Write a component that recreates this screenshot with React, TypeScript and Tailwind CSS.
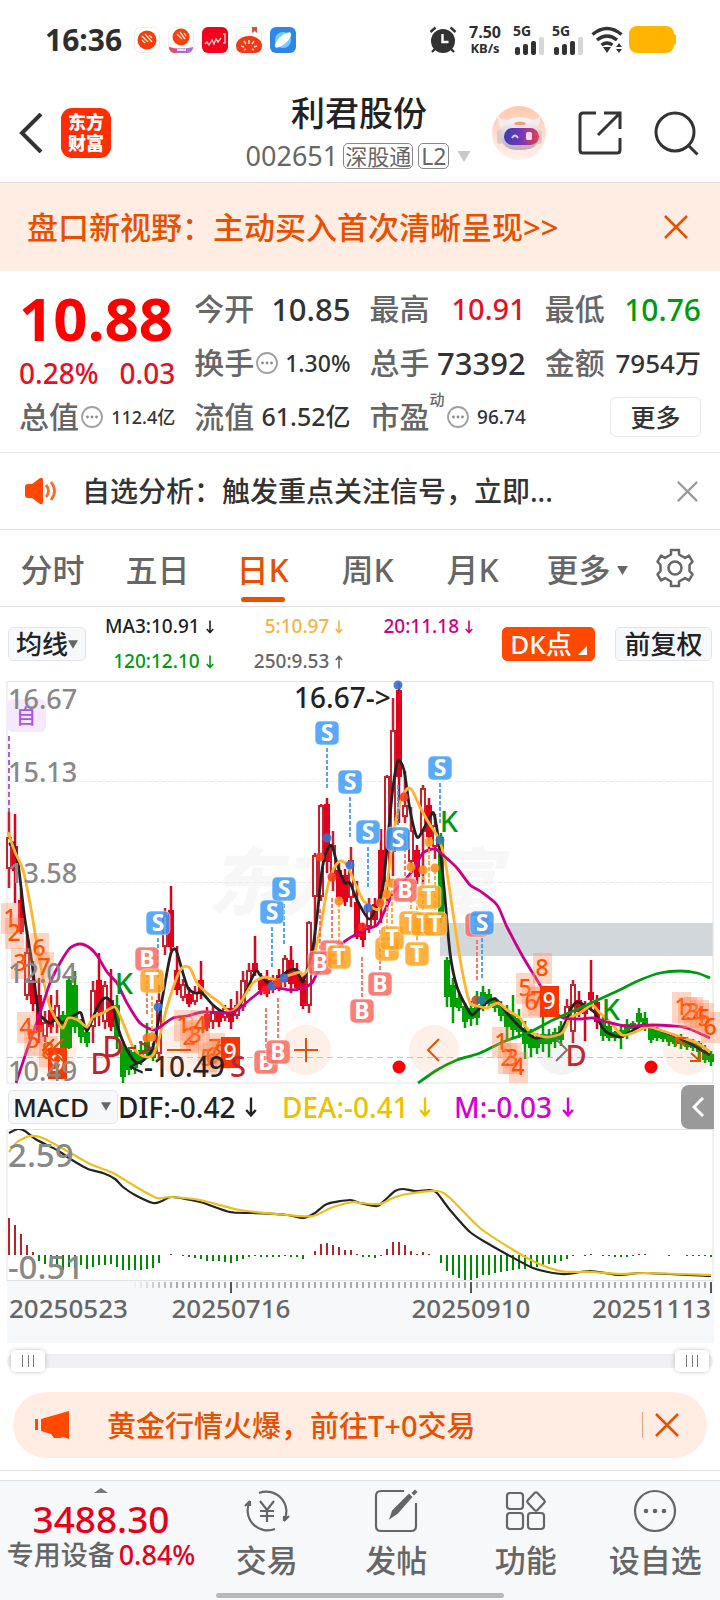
import React, { useState } from 'react';

const FONT = "font-['Noto_Sans','Noto_Sans_CJK_SC',sans-serif]";

// --- K-LINE DATA: [colour, high, body top, body bottom, low] in chart units ---
// r = hollow rise, R = solid red, g = fall
type Candle = [string, number, number, number, number];

const CANDLES: Candle[] = [
  ['r', 131, 157, 187, 207], ['R', 133, 166, 189, 222], ['R', 207, 220, 250, 253], ['r', 250, 272, 314, 319],
  ['R', 280, 300, 322, 330], ['R', 297, 315, 350, 362], ['r', 330, 342, 355, 361], ['R', 314, 330, 345, 352],
  ['r', 309, 325, 340, 352], ['g', 330, 335, 367, 369], ['g', 296, 300, 366, 368], ['g', 290, 305, 345, 352],
  ['g', 338, 342, 355, 362], ['g', 348, 352, 361, 366], ['r', 300, 310, 345, 362], ['R', 272, 300, 330, 345],
  ['r', 300, 305, 340, 348], ['R', 288, 320, 345, 350], ['g', 314, 325, 355, 368], ['g', 360, 368, 395, 402],
  ['g', 366, 370, 388, 394], ['g', 364, 372, 386, 393], ['g', 360, 370, 380, 384], ['g', 342, 362, 372, 378],
  ['g', 362, 368, 376, 380], ['r', 304, 320, 372, 377], ['r', 227, 235, 265, 274], ['R', 205, 230, 265, 270],
  ['R', 265, 290, 308, 314], ['r', 298, 304, 316, 320], ['R', 306, 314, 322, 326], ['r', 305, 312, 320, 324],
  ['R', 280, 300, 312, 318], ['R', 326, 334, 346, 350], ['r', 324, 332, 340, 348], ['R', 328, 333, 340, 346],
  ['r', 324, 328, 336, 340], ['R', 318, 328, 340, 348], ['r', 310, 325, 334, 338], ['r', 290, 300, 325, 330],
  ['r', 282, 290, 305, 310], ['R', 255, 283, 290, 295], ['R', 292, 298, 308, 314], ['R', 289, 300, 312, 316],
  ['r', 294, 299, 308, 312], ['R', 288, 295, 305, 310], ['r', 274, 278, 300, 306], ['R', 265, 280, 302, 312],
  ['R', 282, 290, 306, 310], ['R', 292, 300, 324, 328], ['r', 240, 242, 324, 332], ['r', 172, 175, 215, 280],
  ['r', 123, 125, 215, 220], ['R', 117, 124, 180, 192], ['r', 150, 165, 195, 210], ['R', 182, 190, 215, 220],
  ['R', 188, 195, 220, 225], ['r', 166, 180, 216, 226], ['R', 200, 222, 255, 258], ['R', 242, 250, 258, 266],
  ['r', 217, 225, 245, 252], ['R', 217, 224, 238, 246], ['R', 148, 170, 220, 242], ['r', 94, 96, 200, 230],
  ['r', 17, 50, 170, 195], ['R', 2, 10, 95, 142], ['r', 90, 125, 135, 142], ['r', 126, 150, 180, 186],
  ['R', 164, 170, 195, 203], ['r', 104, 108, 150, 205], ['R', 117, 125, 155, 168], ['r', 133, 145, 165, 178],
  ['g', 152, 157, 235, 242], ['g', 276, 280, 315, 326], ['g', 297, 305, 325, 342], ['g', 310, 318, 326, 330],
  ['g', 322, 326, 340, 347], ['g', 320, 328, 337, 345], ['g', 310, 325, 336, 344], ['g', 305, 312, 324, 330],
  ['g', 308, 314, 322, 327], ['g', 316, 320, 326, 331], ['g', 320, 325, 334, 340], ['g', 324, 330, 345, 359],
  ['g', 314, 334, 348, 356], ['g', 328, 338, 350, 357], ['g', 340, 348, 362, 378], ['g', 348, 354, 366, 376],
  ['g', 352, 358, 366, 373], ['g', 334, 354, 362, 371], ['g', 348, 356, 362, 376], ['g', 347, 352, 360, 367],
  ['g', 340, 346, 358, 365], ['r', 318, 326, 336, 342], ['r', 299, 304, 350, 362], ['R', 310, 320, 330, 336],
  ['R', 320, 326, 332, 360], ['R', 279, 312, 318, 328], ['R', 314, 322, 340, 348], ['g', 336, 342, 354, 360],
  ['g', 342, 346, 356, 360], ['g', 350, 352, 356, 360], ['g', 344, 350, 356, 368], ['g', 338, 344, 352, 358],
  ['g', 340, 343, 347, 350], ['g', 327, 333, 340, 345], ['g', 331, 338, 346, 350], ['g', 344, 347, 358, 362],
  ['g', 346, 350, 356, 360], ['g', 349, 352, 357, 361], ['g', 352, 354, 360, 365], ['g', 354, 357, 362, 366],
  ['g', 353, 358, 362, 368], ['g', 356, 360, 365, 369], ['g', 358, 361, 366, 370], ['g', 360, 363, 370, 378],
  ['g', 364, 370, 378, 382], ['g', 370, 374, 380, 385],
];

const MACD_BARS = [
  37, 30, 21, 10, 3, -6, -9, -11, -12, -15, -12, -13, -10, -14, -12, -10, -10, -9, -12, -15, -15, -15, -15, -14, -13,
  -8, 0, 1, 0, -1, -2, -3, -4, -6, -6, -6, -7, -8, -6, -4, -2, -1, -2, -2, -2, -2, -1, -2, -2, -4, 0, 4, 11, 12, 10,
  8, 5, 5, 1, -2, -2, -3, -1, 6, 13, 13, 10, 4, 1, 3, 1, 0, -8, -16, -20, -23, -25, -25, -23, -20, -20, -18, -17,
  -16, -15, -14, -14, -13, -12, -11, -9, -8, -6, -4, -1, 0, -1, 1, 0, -1, -1, -2, -2, -2, -1, 1, 1, 0, 0, 0, -1, 0,
  0, -1, -1, -1, -1, -2,
];

const MA3 =
  '9,164 13,162 18,182 21,206 25,239 32,282 38,329 42,336 50,342 57,337 62,342 68,337 75,334 81,332 87,350 97,327 105,317 112,322 118,347 127,369 137,382 147,376 153,366 158,342 165,302 171,272 176,269 182,289 188,307 195,312 202,312 213,324 223,331 233,332 240,324 255,291 260,294 267,301 273,302 280,296 290,289 297,289 300,296 303,301 307,289 312,272 317,236 322,189 327,169 332,165 338,186 345,202 350,202 357,219 369,238 377,224 383,206 388,156 393,106 398,80 404,89 410,129 417,156 423,149 430,136 434,133 440,169 444,206 450,272 457,306 467,327 472,334 478,329 490,319 497,319 507,332 520,346 535,357 547,355 558,354 565,342 572,326 578,321 587,326 595,332 602,346 608,352 620,356 630,351 643,344 653,347 667,352 687,361 710,374';
const MA5 =
  '8,151 15,171 23,189 30,222 35,252 42,292 50,326 62,347 68,337 78,339 87,346 93,336 103,332 115,326 123,342 133,366 143,375 152,375 158,362 167,326 177,296 183,286 190,287 197,302 207,312 220,322 230,331 240,322 253,302 265,296 277,299 290,294 300,291 303,294 312,282 320,249 327,209 333,189 340,180 347,184 355,202 363,219 373,227 380,227 387,202 393,156 400,122 407,108 412,109 420,126 430,144 438,156 445,179 453,232 462,289 470,322 478,325 487,327 498,322 507,329 520,337 530,351 547,356 562,352 570,337 580,332 592,324 600,332 610,341 622,354 633,352 647,346 660,349 680,356 697,362 710,371';
const MA20 =
  '16,402 27,369 40,332 50,302 60,282 70,267 80,263 90,267 98,276 107,291 117,302 127,322 140,342 153,349 160,346 173,337 187,335 203,331 230,332 240,327 253,316 268,306 290,309 303,307 312,302 318,291 330,282 343,262 355,254 363,249 377,244 385,229 393,212 403,201 413,189 423,172 435,168 443,174 457,187 470,204 480,210 497,224 507,246 523,276 540,304 555,330 563,337 580,338 593,337 607,341 627,345 653,344 673,345 687,347 710,357';
const MA120 =
  '418,402 437,389 457,379 480,372 503,361 530,351 553,339 580,327 613,312 640,299 660,292 680,290 697,292 710,297';
const DIF =
  '9,4 18,0 25,2 37,11 57,21 72,31 88,40 103,44 115,50 123,58 135,66 153,74 162,72 172,68 200,73 230,83 253,84 287,86 303,89 315,84 327,75 350,71 360,74 377,77 385,71 395,62 403,60 415,62 430,61 437,64 450,81 470,103 487,114 510,127 533,139 553,144 567,145 590,142 620,146 643,144 711,147';
const DEA =
  '9,23 17,13 30,7 43,9 67,22 90,35 113,44 133,56 157,69 170,68 200,71 240,81 287,86 313,87 333,78 353,73 360,74 380,75 393,69 407,65 437,62 450,69 480,99 510,119 537,134 560,142 577,143 593,143 620,145 647,144 711,146';

// Trade marks: [kind, x, y, connector below the badge]
type Mark = [string, number, number, boolean?];
const MARKS: Mark[] = [
  ['B', 147, 278, true], ['T', 152, 300, true], ['S', 158, 242, true], ['S', 272, 231, true], ['S', 284, 208, true],
  ['S', 327, 52, true], ['S', 350, 101, true], ['S', 368, 151, true], ['S', 440, 87, true], ['B', 266, 381],
  ['B', 278, 371], ['B', 332, 271], ['B', 320, 282], ['T', 339, 276], ['B', 362, 330], ['B', 380, 303],
  ['T', 387, 268], ['T', 392, 257], ['T', 411, 242], ['T', 423, 243], ['T', 435, 243], ['T', 429, 216],
  ['B', 405, 209], ['T', 417, 273], ['S', 398, 158], ['B', 477, 244, true], ['S', 482, 242, true],
];
const MARK_COLOR: Record<string, string> = { S: '#3f9bf8', B: '#fa6a60', T: '#ffa31f' };

const DOTS: [string, number, number][] = [
  ['#ff6a1a', 147, 357], ['#ff8c1a', 152, 356], ['#3a6fd8', 158, 326], ['#ff3b1f', 320, 176], ['#3a6fd8', 327, 157],
  ['#ff3b1f', 332, 196], ['#ff8c1a', 339, 220], ['#3a6fd8', 350, 184], ['#ff1f1f', 362, 246], ['#3a6fd8', 368, 227],
  ['#ff5a1a', 380, 222], ['#ff8c1a', 387, 213], ['#ff8c1a', 392, 202], ['#3a6fd8', 398, 4], ['#ff3b1f', 404, 116],
  ['#ff8c1a', 411, 186], ['#ff8c1a', 423, 189], ['#ff9f1a', 429, 161], ['#ff8c1a', 435, 187], ['#2f7fae', 440, 159],
  ['#ff1f1f', 266, 309], ['#3a6fd8', 272, 305], ['#ff3b1f', 278, 302], ['#3a6fd8', 284, 297], ['#b8502a', 476, 319],
  ['#1f7fa8', 482, 319],
];

// Nine-turn sequence counts
const COUNTS: [number, number, number][] = [
  [1, 10, 237], [2, 14, 252], [3, 20, 282], [6, 39, 267], [7, 44, 286], [4, 26, 346], [5, 33, 359], [8, 48, 370],
  [9, 57, 382], [1, 183, 344], [2, 189, 356], [3, 195, 354], [4, 200, 344], [5, 207, 377], [6, 212, 375],
  [7, 215, 367], [8, 221, 372], [9, 230, 371], [5, 525, 307], [6, 531, 321], [7, 537, 319], [8, 542, 287],
  [9, 549, 320], [1, 501, 361], [2, 507, 377], [3, 512, 377], [4, 518, 386], [1, 681, 326], [2, 687, 331],
  [3, 693, 331], [4, 699, 334], [5, 704, 337], [6, 710, 346],
];

const LETTERS: [string, number, number, string][] = [
  ['K', 124, 313, '#009a10'], ['K', 449, 151, '#009a10'], ['K', 611, 339, '#009a10'], ['D', 113, 376, '#c2222c'],
  ['D', 101, 393, '#c2222c'], ['D', 576, 385, '#c2222c'], ['S', 238, 396, '#c2222c'],
];

// Turns "x,y x,y" into a smooth path through every point
function smooth(points: string) {
  const p = points.split(' ').map((s) => s.split(',').map(Number));
  let d = `M${p[0][0]} ${p[0][1]}`;
  for (let i = 0; i < p.length - 1; i++) {
    const a = p[Math.max(i - 1, 0)];
    const b = p[i];
    const c = p[i + 1];
    const e = p[Math.min(i + 2, p.length - 1)];
    d += `C${b[0] + (c[0] - a[0]) / 8} ${b[1] + (c[1] - a[1]) / 8} ${c[0] - (e[0] - b[0]) / 8} ${c[1] - (e[1] - b[1]) / 8} ${c[0]} ${c[1]}`;
  }
  return d;
}

const candleX = (i: number) => 9 + i * 6;

function Arrow({ up = false, className }: { up?: boolean; className: string }) {
  return (
    <svg viewBox="0 0 12 20" className={className} fill="none" stroke="currentColor" strokeWidth="2" aria-hidden="true">
      {up ? <path d="M6 18V3M2 7.500L6 3l4 4.500" /> : <path d="M6 2v15M2 12.500L6 17l4-4.500" />}
    </svg>
  );
}

function Caret({ className }: { className: string }) {
  return (
    <svg viewBox="0 0 12 10" className={className} fill="currentColor" aria-hidden="true">
      <path d="M0 0h12L6 10z" />
    </svg>
  );
}

function Cross({ className }: { className: string }) {
  return (
    <svg viewBox="0 0 24 24" className={className} fill="none" stroke="currentColor" strokeWidth="2.500" aria-hidden="true">
      <path d="M1 1l22 22M23 1L1 23" />
    </svg>
  );
}

function InfoDots() {
  return (
    <svg viewBox="0 0 22 22" className="ml-0.5 h-[22px] w-[22px] shrink-0" aria-hidden="true">
      <circle cx="11" cy="11" r="10" fill="none" stroke="#a0a0a0" strokeWidth="1.800" />
      <g fill="#8a8a8a">
        <circle cx="6.500" cy="11" r="1.400" />
        <circle cx="11" cy="11" r="1.400" />
        <circle cx="15.500" cy="11" r="1.400" />
      </g>
    </svg>
  );
}

function Signal() {
  return (
    <div className="flex w-[31px] flex-col">
      <span className="text-[14px] leading-[12px] font-bold">5G</span>
      <svg viewBox="0 0 31 18" className="h-[18px] w-[31px]" aria-hidden="true">
        <rect x="2" y="10" width="5" height="8" rx="2" fill="#333" />
        <rect x="10" y="7" width="5" height="11" rx="2" fill="#333" />
        <rect x="18" y="4" width="5" height="14" rx="2" fill="#333" />
        <rect x="26" y="0" width="5" height="18" rx="2" fill="#d6d6d6" />
      </svg>
    </div>
  );
}

function StatusBar() {
  return (
    <div className="flex h-20 items-center pl-[45px] pr-[43px] text-[#2e2e2e]">
      <span className="text-[30px] leading-none font-bold">16:36</span>
      <div className="ml-3 flex gap-2">
        <svg viewBox="0 0 26 26" className="h-[26px] w-[26px]" aria-hidden="true">
          <rect x=".5" y=".5" width="25" height="25" rx="6" fill="#fff" stroke="#eee" />
          <circle cx="13" cy="13" r="9.500" fill="#fb3c0a" />
          <path d="M8 9l6 6M11 7l7 8M15 8l3 3M8 13l3 3" stroke="#ffe9c9" strokeWidth="1.300" />
        </svg>
        <svg viewBox="0 0 26 26" className="h-[26px] w-[26px]" aria-hidden="true">
          <rect x=".5" y=".5" width="25" height="25" rx="6" fill="#fff" stroke="#eee" />
          <path d="M1 20q12 3 24 0v1q-1 5-6 5H7q-5 0-6-5z" fill="#b06ad6" />
          <path d="M1 20q6 2 9 2l-2 4q-6 0-7-6z" fill="#ef4a55" />
          <circle cx="13" cy="10" r="8.500" fill="#f5400f" />
          <path d="M9 7l5 5M12 5l5 7M16 6l2 3" stroke="#ffe9c9" strokeWidth="1.300" />
          <path d="M9 23h9" stroke="#fff" strokeWidth="1.500" />
        </svg>
        <svg viewBox="0 0 26 26" className="h-[26px] w-[26px]" aria-hidden="true">
          <rect width="26" height="26" rx="6" fill="#f4001c" />
          <path d="M3 17l2-2 2 3 3-5 2 4 2-5 2 3 3-4M21 7h2v9h-2" fill="none" stroke="#ffc5c5" strokeWidth="1.400" />
        </svg>
        <svg viewBox="0 0 26 26" className="h-[26px] w-[26px]" aria-hidden="true">
          <rect x=".5" y=".5" width="25" height="25" rx="6" fill="#fff" stroke="#eee" />
          <path d="M16 0h5v6l-2.500-2L16 6z" fill="#d6503a" />
          <path d="M0 18C1 12 7 9 13 9s12 3 13 9q0 8-7 8H7q-7 0-7-8z" fill="#ee3a1b" />
          <path d="M13 13v4M8 14l2 3M18 14l-2 3M5 19l3 1M21 19l-3 1M8 23l2-1M18 23l-2-1" stroke="#ffd9b5" strokeWidth="1.500" />
        </svg>
        <svg viewBox="0 0 26 26" className="h-[26px] w-[26px]" aria-hidden="true">
          <rect width="26" height="26" rx="6" fill="#2f86e6" />
          <circle cx="13" cy="13" r="8" fill="#74cdfb" />
          <ellipse cx="13" cy="13" rx="10.500" ry="4" fill="#fff" transform="rotate(-42 13 13)" />
        </svg>
      </div>
      <div className="ml-auto flex items-center">
        <svg viewBox="0 0 28 28" className="h-7 w-7" aria-hidden="true">
          <circle cx="14" cy="15" r="12" fill="#333" />
          <path d="M1.500 6l5-4.500M26.500 6l-5-4.500M6 23l-3 3M22 23l3 3" stroke="#333" strokeWidth="2.400" />
          <path d="M13.500 8v8h6" stroke="#fff" strokeWidth="2.400" fill="none" />
        </svg>
        <div className="ml-2 flex w-10 flex-col items-center font-bold">
          <span className="text-[16px] leading-4">7.50</span>
          <span className="text-[13px] leading-4">KB/s</span>
        </div>
        <div className="ml-2 flex gap-2">
          <Signal />
          <Signal />
        </div>
        <svg viewBox="0 0 32 28" className="ml-2 h-7 w-8" fill="none" stroke="#333" strokeWidth="3.400" aria-hidden="true">
          <path d="M1.500 8.500q14.500-12 29 0M6 14q10-8 20 0M10.500 19q5.500-4 11 0" />
          <path d="M12 21h8l-4 6z" fill="#333" stroke="none" />
          <path d="M25 21l3-4 3 4zM25 23l3 4 3-4z" fill="#333" stroke="none" />
        </svg>
        <svg viewBox="0 0 48 28" className="ml-1.5 h-7 w-12" aria-hidden="true">
          <rect width="45" height="27" rx="8" fill="#ffb400" />
          <rect x="43" y="8" width="4" height="11" rx="2" fill="#ffb400" />
        </svg>
      </div>
    </div>
  );
}

function Header() {
  return (
    <header className="grid h-[103px] grid-cols-[1fr_auto_1fr] items-center border-b border-[#dcdcdc] pt-1 pr-[21px] pl-[19px]">
      <div className="flex items-center gap-[18px]">
        <button aria-label="返回" className="cursor-pointer">
          <svg viewBox="0 0 24 40" className="h-10 w-6" fill="none" stroke="#333" strokeWidth="4" aria-hidden="true">
            <path d="M22 1L3 20l19 19" />
          </svg>
        </button>
        <div className="flex h-[50px] w-[50px] flex-col items-center justify-center rounded-[11px] bg-[#ff2e00] text-[18px] leading-[21px] font-black text-white">
          <span>东方</span>
          <span>财富</span>
        </div>
      </div>
      <div className="flex flex-col items-center">
        <h1 className="text-[34px] leading-[46px] font-medium text-[#222]">利君股份</h1>
        <div className="flex items-center gap-[5px] font-normal text-[#666]">
          <span className="text-[27px] leading-[40px]">002651</span>
          <span className="rounded-[5px] border border-[#888] px-px text-[22px] leading-[24px]">深股通</span>
          <span className="rounded-[5px] border border-[#888] px-[2px] text-[23px] leading-[24px]">L2</span>
          <Caret className="ml-0.5 h-[11px] w-4 text-[#c9c9c9]" />
        </div>
      </div>
      <div className="flex items-center justify-end gap-8">
        <button aria-label="智能助手" className="cursor-pointer">
          <svg viewBox="0 0 54 54" className="h-[54px] w-[54px]" aria-hidden="true">
            <defs>
              <linearGradient id="halo" x1="0" y1="0" x2="0" y2="1">
                <stop offset="0" stopColor="#ffc8ae" />
                <stop offset="1" stopColor="#fff1ea" />
              </linearGradient>
              <linearGradient id="visor" x1="0" y1="0" x2="1" y2="0">
                <stop offset="0" stopColor="#3a3bb0" />
                <stop offset=".5" stopColor="#7a36b8" />
                <stop offset="1" stopColor="#ee3d4a" />
              </linearGradient>
              <linearGradient id="shell" x1="0" y1="0" x2="0" y2="1">
                <stop offset="0" stopColor="#fdfafa" />
                <stop offset="1" stopColor="#b9aeb4" />
              </linearGradient>
            </defs>
            <circle cx="27" cy="27" r="27" fill="url(#halo)" />
            <path d="M6 10q3 4 10 4l-6 9q-5-5-4-13zM48 10q-3 4-10 4l6 9q5-5 4-13z" fill="#f8ece8" />
            <rect x="5" y="24" width="6" height="14" rx="3" fill="#d9cdd0" />
            <rect x="44" y="24" width="6" height="14" rx="3" fill="#d9cdd0" />
            <path d="M28 11c13 0 19 7 19 18 0 10-5 15-19 15S9 39 9 29c0-11 6-18 19-18z" fill="url(#shell)" />
            <path d="M22 17q6-3 12 0l-1 2H23z" fill="#e8a27c" />
            <rect x="12" y="22" width="35" height="17" rx="8.500" fill="url(#visor)" />
            <path d="M20 32q3-5 6 0" fill="none" stroke="#d8d0ff" strokeWidth="2" />
            <rect x="34" y="26" width="6" height="8" rx="1.500" fill="#ffd9e6" />
          </svg>
        </button>
        <button aria-label="分享" className="cursor-pointer">
          <svg viewBox="0 0 44 44" className="h-11 w-11" fill="none" stroke="#333" strokeWidth="3" aria-hidden="true">
            <path d="M18 2H5q-3 0-3 3v34q0 3 3 3h34q3 0 3-3V27M26 2h16v16M42 2L20 24" />
          </svg>
        </button>
        <button aria-label="搜索" className="cursor-pointer">
          <svg viewBox="0 0 45 45" className="h-[45px] w-[45px]" fill="none" stroke="#333" strokeWidth="3" aria-hidden="true">
            <circle cx="21" cy="21" r="19" />
            <path d="M34 34l9.500 9.500" />
          </svg>
        </button>
      </div>
    </header>
  );
}

function Quote({ label, value, info, sup, className }: { label: string; value: string; info?: boolean; sup?: string; className: string }) {
  return (
    <div className="flex h-[54px] items-center justify-between whitespace-nowrap">
      <dt className="flex items-center text-[30px] leading-[36px] text-[#666]">
        {label}
        {sup && <sup className="self-start text-[15px] leading-none">{sup}</sup>}
        {info && <InfoDots />}
      </dt>
      <dd className={className}>{value}</dd>
    </div>
  );
}

function QuotePanel() {
  return (
    <section className="grid grid-cols-4 gap-x-[19px] border-b border-[#ececec] px-[19px] pt-[11px] pb-2">
      <div>
        <div className="h-[74px] text-[60px] leading-[72px] font-bold text-[#ff0000]">10.88</div>
        <div className="flex h-[34px] items-center justify-between text-[28px] text-[#e60f25]">
          <span>0.28%</span>
          <span>0.03</span>
        </div>
        <dl>
          <Quote label="总值" value="112.4亿" info className="text-[18px] text-[#333]" />
        </dl>
      </div>
      <dl>
        <Quote label="今开" value="10.85" className="text-[31px] text-[#333]" />
        <Quote label="换手" value="1.30%" info className="text-[23px] text-[#333]" />
        <Quote label="流值" value="61.52亿" className="text-[25px] text-[#333]" />
      </dl>
      <dl>
        <Quote label="最高" value="10.91" className="text-[29px] text-[#e60f25]" />
        <Quote label="总手" value="73392" className="text-[31px] text-[#333]" />
        <Quote label="市盈" value="96.74" sup="动" info className="text-[19px] text-[#333]" />
      </dl>
      <div>
        <dl>
          <Quote label="最低" value="10.76" className="text-[30px] text-[#009a10]" />
          <Quote label="金额" value="7954万" className="text-[26px] text-[#333]" />
        </dl>
        <div className="flex h-[54px] items-center justify-end">
          <button className="h-10 w-[91px] cursor-pointer rounded-md border border-[#e8e8e8] text-[25px] leading-none text-[#333]">
            更多
          </button>
        </div>
      </div>
    </section>
  );
}

function PeriodTabs() {
  const [active, setActive] = useState('日K');
  return (
    <nav className="flex h-[77px] items-stretch border-b border-[#dfdfdf] text-[32px] text-[#666]">
      {['分时', '五日', '日K', '周K', '月K'].map((tab) => (
        <button
          key={tab}
          onClick={() => setActive(tab)}
          className={`relative flex flex-1 cursor-pointer items-center justify-center pt-1 ${
            tab === active ? 'text-[#e85000]' : ''
          }`}
        >
          {tab}
          {tab === active && <span className="absolute bottom-1 h-[5px] w-11 rounded-full bg-[#e85000]" />}
        </button>
      ))}
      <button className="flex w-[124px] cursor-pointer items-center justify-center gap-1.5 pt-1">
        更多
        <Caret className="h-[9px] w-[11px]" />
      </button>
      <button aria-label="设置" className="mr-[25px] ml-[6px] cursor-pointer">
        <svg viewBox="0 0 40 40" className="h-10 w-10" fill="none" stroke="#666" strokeWidth="2.500" strokeLinejoin="round" aria-hidden="true">
          <path d="M16 2h8v4.500l6 3.400 4-2.300 3.500 6-3 3.400v6l3 3.400-3.500 6-4-2.300-6 3.400V38h-8v-4.500l-6-3.400-4 2.300-3.500-6 3-3.400v-6l-3-3.400 3.500-6 4 2.300 6-3.400z" />
          <circle cx="20" cy="20" r="6.500" />
        </svg>
      </button>
    </nav>
  );
}

function AverageRow() {
  const box = 'h-[34px] cursor-pointer rounded-[5px] border text-[26px] leading-[30px]';
  return (
    <div className="flex h-[74px] items-center px-2">
      <button className={`${box} flex w-[78px] items-center justify-center border-[#e3e5e8] bg-[#f7f8fa] text-[#222]`}>
        均线
        <Caret className="h-[9px] w-[10px] text-[#666]" />
      </button>
      <div className="mr-[27px] grid flex-1 grid-cols-3 text-[19px] leading-[35px] whitespace-nowrap">
        <span className="flex items-center justify-end text-[#222]">MA3:10.91<Arrow className="ml-1 h-4 w-3" /></span>
        <span className="flex items-center justify-end text-[#f5b43c]">5:10.97<Arrow className="ml-1 h-4 w-3" /></span>
        <span className="flex items-center justify-end text-[#cc0088]">20:11.18<Arrow className="ml-1 h-4 w-3" /></span>
        <span className="flex items-center justify-end text-[#009a10]">120:12.10<Arrow className="ml-1 h-4 w-3" /></span>
        <span className="flex items-center justify-end text-[#666]">250:9.53<Arrow up className="ml-1 h-4 w-3" /></span>
      </div>
      <button className={`${box} flex w-[93px] items-center justify-center gap-1.5 border-[#ff4800] bg-[#ff4800] text-white`}>
        DK点
        <svg viewBox="0 0 9 9" className="mt-3 h-[9px] w-[9px]" fill="#fff" aria-hidden="true">
          <path d="M9 0v9H0z" />
        </svg>
      </button>
      <button className={`${box} ml-5 w-[97px] border-[#e3e5e8] bg-[#f7f8fa] text-[#222]`}>前复权</button>
    </div>
  );
}

function KLineChart() {
  return (
    <div className="relative">
      <svg viewBox="0 0 720 403" className="block w-full overflow-visible" role="img" aria-label="日K线图">
        <text x="208" y="228" fontSize="73" fontWeight="900" fontStyle="italic" fill="#f7f7f7">东方财富</text>
        <rect x="440" y="242" width="273" height="33" fill="#d2d7dc" />
        <g stroke="#ececec" strokeDasharray="5 2">
          <path d="M7 100.500H713M7 201.500H713M7 301.500H713" />
        </g>
        <path d="M7 376.500H713" stroke="#d9c3a0" strokeDasharray="6 4" />
        <path d="M7 .5H713V402H7z" fill="none" stroke="#e2e2e2" />

        {/* --- SIDE MARK --- */}
        <path d="M9 55V131" stroke="#a95fd6" strokeWidth="2" strokeDasharray="5 3" />
        <rect x="7" y="18" width="39" height="33" rx="6" fill="#f6e9fd" />
        <text x="26" y="43" fontSize="20" fill="#a855e8" textAnchor="middle">自</text>

        {/* --- CANDLES --- */}
        {CANDLES.map(([kind, high, top, bottom, low], i) => {
          const color = kind === 'g' ? '#00a000' : kind === 'R' ? '#e3001b' : '#c8202c';
          return (
            <g key={i} stroke={color} strokeWidth="2">
              <path d={`M${candleX(i)} ${high}V${top}M${candleX(i)} ${bottom}V${low}`} strokeWidth="2.500" />
              <rect x={candleX(i) - 2} y={top} width="4" height={bottom - top} fill={kind === 'r' ? '#fff' : color} />
            </g>
          );
        })}

        {/* --- MOVING AVERAGES --- */}
        <g fill="none" strokeWidth="2.800" strokeLinejoin="round">
          <path d={smooth(MA3)} stroke="#262223" />
          <path d={smooth(MA5)} stroke="#fdb52f" />
          <path d={smooth(MA20)} stroke="#cc0088" />
          <path d={smooth(MA120)} stroke="#009a10" />
        </g>

        {/* --- NINE-TURN COUNTS --- */}
        {COUNTS.map(([n, x, y], i) => (
          <g key={i}>
            <rect x={x - 9} y={y - 15} width="19" height="31" fill={n === 9 ? '#fa3400' : '#ff8a5a'} opacity={n === 9 ? 1 : 0.35} />
            <text x={x} y={y + 8} fontSize="23" textAnchor="middle" fill={n === 9 ? '#fff' : '#ff5000'}>{n}</text>
          </g>
        ))}

        {/* --- TRADE MARKS --- */}
        {MARKS.map(([kind, x, y, below], i) => (
          <path
            key={i}
            d={below ? `M${x} ${y + 15}V${y + 55}` : `M${x} ${y - 54}V${y - 14}`}
            stroke={MARK_COLOR[kind]}
            strokeWidth="1.800"
            strokeDasharray="4 2"
          />
        ))}
        {DOTS.map(([color, x, y], i) => (
          <circle key={i} cx={x} cy={y} r="4.500" fill={color} opacity=".9" />
        ))}
        {MARKS.map(([kind, x, y], i) => (
          <g key={i}>
            <rect x={x - 12} y={y - 12} width="24" height="24" rx="5" fill={MARK_COLOR[kind]} stroke="#fff" strokeOpacity=".6" opacity=".85" />
            <text x={x} y={y + 8} fontSize="23" fontWeight="700" textAnchor="middle" fill="#fff">{kind}</text>
          </g>
        ))}
        {LETTERS.map(([letter, x, y, color], i) => (
          <text key={i} x={x} y={y} fontSize="29" textAnchor="middle" fill={color}>{letter}</text>
        ))}
        <path d="M130 367h6M139 361l12 6-12 6" fill="none" stroke="#c2222c" strokeWidth="2" />
        <circle cx="399" cy="386" r="6.500" fill="#ff0000" />
        <circle cx="651" cy="386" r="6.500" fill="#ff0000" />

        {/* --- LABELS --- */}
        <g fontSize="27" fill="#888">
          <text x="8" y="28">16.67</text>
          <text x="8" y="101">15.13</text>
          <text x="8" y="202">13.58</text>
          <text x="8" y="302">12.04</text>
          <text x="8" y="400">10.49</text>
        </g>
        <g fontSize="28" fill="#222">
          <text x="294" y="27">16.67-&gt;</text>
          <text x="128" y="396">&lt;-10.49</text>
        </g>
      </svg>

      {/* --- CHART CONTROLS --- */}
      <div className="absolute inset-x-0 bottom-[9px] flex justify-between pr-[7px] pl-[27px]">
        {[
          ['最早', 'M27 14L16 25l11 11M36 14L25 25l11 11'],
          ['缩小', 'M13 25h24'],
          ['放大', 'M13 25h24M25 13v24'],
          ['左移', 'M30 14L19 25l11 11'],
          ['右移', 'M20 14l11 11-11 11'],
          ['全屏', 'M13 21v-8h10M13 13l9 8M37 26v10h-10M37 36l-9-8'],
        ].map(([label, d]) => (
          <button
            key={label}
            aria-label={label}
            className={`h-[50px] w-[50px] cursor-pointer rounded-full ${
              label === '右移' ? 'bg-[#888888]/10 text-[#777]' : 'bg-[#ff7a45]/12 text-[#e85000]'
            }`}
          >
            <svg viewBox="0 0 50 50" className="h-full w-full" fill="none" stroke="currentColor" strokeWidth="2" aria-hidden="true">
              <path d={d} />
            </svg>
          </button>
        ))}
      </div>
    </div>
  );
}

function MacdPanel() {
  return (
    <section>
      <div className="flex h-[45px] items-center pr-[6px] pl-2 text-[28px] whitespace-nowrap">
        <button className="flex h-[34px] w-[110px] cursor-pointer items-center justify-between rounded-[5px] border border-[#e3e5e8] bg-[#f7f8fa] pr-1.5 pl-1 text-[26px] leading-none text-[#222]">
          MACD
          <Caret className="h-[9px] w-[10px] text-[#666]" />
        </button>
        <span className="flex w-[164px] items-center text-[#222]">DIF:-0.42<Arrow className="ml-2 h-6 w-4" /></span>
        <span className="flex w-[172px] items-center text-[#efbf00]">DEA:-0.41<Arrow className="ml-2 h-6 w-4" /></span>
        <span className="flex items-center text-[#d400d4]">M:-0.03<Arrow className="ml-2 h-6 w-4" /></span>
        <button aria-label="展开" className="ml-auto flex h-[44px] w-[33px] cursor-pointer items-center justify-center rounded-l-lg bg-[#999]">
          <svg viewBox="0 0 12 20" className="h-5 w-3" fill="none" stroke="#fff" strokeWidth="3" aria-hidden="true">
            <path d="M11 1L2 10l9 9" />
          </svg>
        </button>
      </div>
      <svg viewBox="0 0 720 215" className="block w-full" role="img" aria-label="MACD指标图">
        <rect x="7" y="152" width="707" height="62" fill="#f7f8fa" />
        <path d="M7 .5H713V151.500H7z" fill="none" stroke="#e2e2e2" />
        {MACD_BARS.map((v, i) => (
          <rect
            key={i}
            x={candleX(i) - 1}
            y={v > 0 ? 126 - v : 126}
            width="2"
            height={Math.abs(v)}
            fill={v > 0 ? '#b3242c' : '#008a00'}
          />
        ))}
        {MACD_BARS.map((_, i) => {
          const major = i === 37 || i === 77 || i === 117;
          return (
            <rect
              key={i}
              x={candleX(i) - 1}
              y="153"
              width="2"
              height={major ? 11 : 6}
              fill={major ? '#555' : '#aaa'}
              opacity={Math.min(Math.max((i - 20) / 8, 0), 1)}
            />
          );
        })}
        <g fill="none" strokeWidth="2.200">
          <path d={smooth(DIF)} stroke="#262223" />
          <path d={smooth(DEA)} stroke="#ebc01a" />
        </g>
        <g fontSize="33" fill="#888">
          <text x="8" y="38">2.59</text>
          <text x="8" y="150">-0.51</text>
        </g>
        <g fontSize="26" fill="#666">
          <text x="9" y="189">20250523</text>
          <text x="231" y="189" textAnchor="middle">20250716</text>
          <text x="471" y="189" textAnchor="middle">20250910</text>
          <text x="711" y="189" textAnchor="end">20251113</text>
        </g>
      </svg>
    </section>
  );
}

function RangeBar() {
  const [from, setFrom] = useState(0);
  const [to, setTo] = useState(100);
  const input =
    'pointer-events-none absolute inset-x-1 top-0 h-[22px] appearance-none bg-transparent [&::-webkit-slider-thumb]:pointer-events-auto [&::-webkit-slider-thumb]:h-[22px] [&::-webkit-slider-thumb]:w-[34px] [&::-webkit-slider-thumb]:cursor-pointer [&::-webkit-slider-thumb]:appearance-none [&::-webkit-slider-thumb]:rounded-[5px] [&::-webkit-slider-thumb]:bg-[linear-gradient(90deg,#fff_11px,#777_11px,#777_12px,#fff_12px,#fff_17px,#777_17px,#777_18px,#fff_18px,#fff_22px,#777_22px,#777_23px,#fff_23px)] [&::-webkit-slider-thumb]:shadow-[inset_0_5px_0_#fff,inset_0_-5px_0_#fff,0_0_4px_rgba(0,0,0,0.25)]';
  return (
    <div className="relative mx-[7px] mt-[6px] h-[22px]">
      <div className="absolute inset-x-0 top-1 h-[14px] rounded-full bg-[#f0f0f3]" />
      <input type="range" aria-label="起始" value={from} onChange={(e) => setFrom(Number(e.target.value))} className={input} />
      <input type="range" aria-label="结束" value={to} onChange={(e) => setTo(Number(e.target.value))} className={input} />
    </div>
  );
}

function NavItem({ label, children }: { label: string; children: React.ReactNode }) {
  return (
    <button className="flex flex-1 cursor-pointer flex-col items-center pt-2 text-[31px] leading-[40px] text-[#666]">
      <svg viewBox="0 0 46 44" className="mb-[7px] h-11 w-[46px] overflow-visible" fill="none" stroke="#666" strokeWidth="2.200" aria-hidden="true">
        {children}
      </svg>
      {label}
    </button>
  );
}

function BottomNav() {
  return (
    <footer className="border-t border-[#dedede] bg-[#f7f8fa] pb-[2px]">
      <div className="flex h-[112px]">
        <button className="flex w-[202px] cursor-pointer flex-col items-center pt-[7px] whitespace-nowrap">
          <svg viewBox="0 0 14 5" className="h-[5px] w-3.5" fill="#777" aria-hidden="true">
            <path d="M0 5l7-5 7 5z" />
          </svg>
          <span className="mt-1 text-[37px] leading-[44px] text-[#e6001c]">3488.30</span>
          <span className="flex items-center gap-1 text-[27px] leading-[28px] text-[#666]">
            专用设备<span className="text-[#e6001c]">0.84%</span>
          </span>
        </button>
        <NavItem label="交易">
          <path d="M15 4a20 20 0 0 1 25 28l5-5M31 40A20 20 0 0 1 6 12l-5 5M40 32v-5M6 12v5" />
          <path d="M16 12l7 9 7-9M23 21v12M16 22h14M16 27h14" />
        </NavItem>
        <NavItem label="发帖">
          <path d="M31 2H8q-5 0-5 5v30q0 5 5 5h30q5 0 5-5V14" />
          <path d="M18 28l2-6L36 6l2 2-14 16zM40 4l2-2 1 1-2 2z" fill="#666" />
        </NavItem>
        <NavItem label="功能">
          <rect x="4" y="4" width="16" height="16" rx="3" />
          <rect x="4" y="24" width="16" height="16" rx="3" />
          <rect x="25" y="24" width="16" height="16" rx="3" />
          <path d="M31.500 4q1.500-1.500 3 0l6.500 7q1.500 1.500 0 3l-6.500 7q-1.500 1.500-3 0l-6.500-7q-1.500-1.500 0-3z" />
        </NavItem>
        <NavItem label="设自选">
          <circle cx="23" cy="22" r="20" />
          <g fill="#666" stroke="none">
            <circle cx="14" cy="22" r="2.300" />
            <circle cx="23" cy="22" r="2.300" />
            <circle cx="32" cy="22" r="2.300" />
          </g>
        </NavItem>
      </div>
      <div className="mx-auto h-[5px] w-2/5 rounded-full bg-[#b8b8b8]" />
    </footer>
  );
}

export default function App() {
  return (
    <main className={`w-full bg-white font-medium ${FONT}`}>
      <StatusBar />
      <Header />

      {/* --- TOP BANNER --- */}
      <div className="flex h-[88px] items-center justify-between bg-[#ffece3] pr-8 pl-[27px] text-[#e85000]">
        <a href="#feature" className="text-[31px] leading-none whitespace-nowrap">盘口新视野：主动买入首次清晰呈现&gt;&gt;</a>
        <button aria-label="关闭" className="cursor-pointer"><Cross className="h-6 w-6" /></button>
      </div>

      <QuotePanel />

      {/* --- ANALYSIS NOTICE --- */}
      <div className="flex h-[77px] items-center border-b border-[#dfdfdf] pr-[22px] pl-6">
        <svg viewBox="0 0 34 28" className="h-7 w-[34px]" aria-hidden="true">
          <path d="M1 10q0-3 3-3h4l8-6q3-1 3 2v22q0 3-3 2l-8-6H4q-3 0-3-3z" fill="#ff4800" />
          <path d="M22 8q5 6 0 12M27 5q7 9 0 18" fill="none" stroke="#ff6a2a" strokeWidth="2.800" />
        </svg>
        <p className="ml-6 flex-1 text-[28px] leading-none whitespace-nowrap text-[#333]">自选分析：触发重点关注信号，立即...</p>
        <button aria-label="关闭" className="cursor-pointer text-[#999]"><Cross className="h-[21px] w-[21px]" /></button>
      </div>

      <PeriodTabs />
      <AverageRow />
      <KLineChart />
      <MacdPanel />
      <RangeBar />

      {/* --- PROMO --- */}
      <div className="mx-[13px] mt-5 flex h-[66px] items-center rounded-full bg-[#ffece3] pr-7 pl-[22px] text-[#e85000]">
        <svg viewBox="0 0 34 30" className="h-[30px] w-[34px]" fill="#ff4800" aria-hidden="true">
          <path d="M0 9h3v11H0zM6 9L34 1v28l-6-2-3 1h-6l-3-4-10-3z" />
        </svg>
        <a href="#gold" className="ml-[38px] flex-1 text-[29px] leading-none whitespace-nowrap">黄金行情火爆，前往T+0交易</a>
        <span className="mr-3 h-[26px] w-px bg-[#eba27d]" />
        <button aria-label="关闭" className="cursor-pointer"><Cross className="h-6 w-6" /></button>
      </div>
      <div className="mt-3 h-[10px] border-t border-[#e4e4e4]" />

      <BottomNav />
    </main>
  );
}
